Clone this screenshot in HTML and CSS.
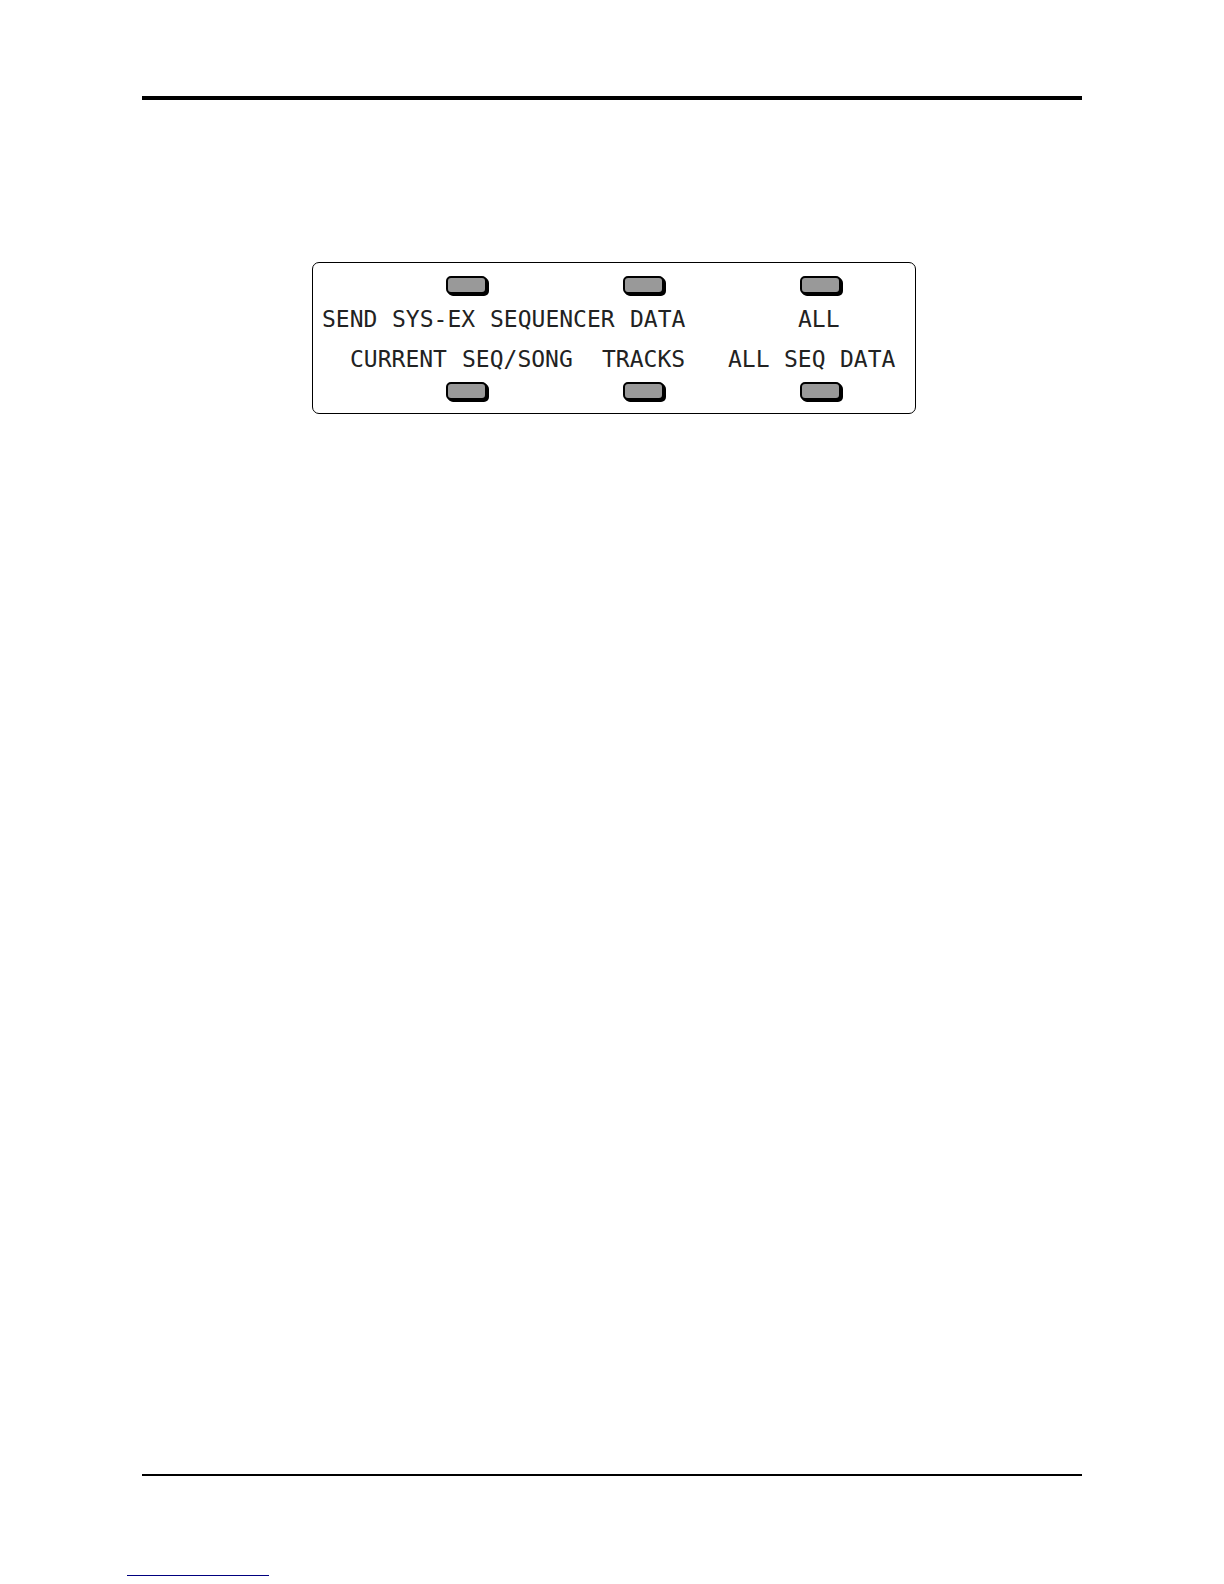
FILE: index.html
```html
<!DOCTYPE html>
<html lang="en">
<head>
<meta charset="utf-8">
<meta name="viewport" content="width=device-width, initial-scale=1">
<title>Send Sys-Ex Sequencer Data</title>
<link rel="stylesheet" href="styles.css">
</head>
<body>
<div class="page">
  <main class="sheet">
    <section class="panel" aria-label="Sequencer display">
      <div class="keys">
        <button class="key" type="button" aria-label="Upper key 1"></button>
        <button class="key" type="button" aria-label="Upper key 2"></button>
        <button class="key" type="button" aria-label="All"></button>
      </div>
      <div class="display">
        <p class="line">
          <span class="col-1">SEND</span>
          <span class="col-6">SYS-EX</span>
          <span class="col-13">SEQUENCER</span>
          <span class="col-23">DATA</span>
          <span class="col-35">ALL</span>
        </p>
        <p class="line">
          <span class="col-3">CURRENT</span>
          <span class="col-11">SEQ/SONG</span>
          <span class="col-21">TRACKS</span>
          <span class="col-30">ALL</span>
          <span class="col-34">SEQ</span>
          <span class="col-38">DATA</span>
        </p>
      </div>
      <div class="keys">
        <button class="key" type="button" aria-label="Current seq/song"></button>
        <button class="key" type="button" aria-label="Tracks"></button>
        <button class="key" type="button" aria-label="All seq data"></button>
      </div>
    </section>
  </main>
  <footer class="footer">
    <a class="footer-link" href="#" aria-label="Back to top"></a>
  </footer>
</div>
</body>
</html>
```
FILE: styles.css
```css
* {
  box-sizing: border-box;
}

body {
  margin: 0;
  background: #fff;
  color: #222;
}

.page {
  display: flex;
  flex-direction: column;
  min-height: 100vh;
  padding-top: 96px;
}

.sheet {
  flex: 1;
  margin: 0 142px;
  padding: 162px 0 0 170px;
  border-top: 4px solid #000;
  border-bottom: 2px solid #000;
}

.panel {
  display: flex;
  flex-direction: column;
  width: 604px;
  padding: 13px 0;
  border: 1px solid #000;
  border-radius: 7px;
}

.keys {
  display: flex;
  gap: 136px;
  padding-left: 133px;
}

.key {
  width: 41px;
  height: 18px;
  padding: 0;
  border: 2px solid #000;
  border-radius: 5px;
  background: #999;
  box-shadow: 1px 1px 0 #000, 2px 2px 0 #000;
}

.display {
  padding: 5px 0 3px 9px;
}

/* Character display: one 14px column per character cell */
.line {
  display: grid;
  grid-template-columns: repeat(41, 14px);
  margin: 0;
  font: 23px/40px "DejaVu Sans Mono", "Liberation Mono", monospace;
  white-space: nowrap;
}

.line span {
  width: 0;
}

.col-1 { grid-column: 1; }
.col-3 { grid-column: 3; }
.col-6 { grid-column: 6; }
.col-11 { grid-column: 11; }
.col-13 { grid-column: 13; }
.col-21 { grid-column: 21; }
.col-23 { grid-column: 23; }
.col-30 { grid-column: 30; }
.col-34 { grid-column: 34; }
.col-35 { grid-column: 35; }
.col-38 { grid-column: 38; }

.footer {
  height: 108px;
  padding: 99px 0 0 127px;
}

.footer-link {
  display: block;
  width: 142px;
  border-bottom: 1px solid #00007f;
}
```
